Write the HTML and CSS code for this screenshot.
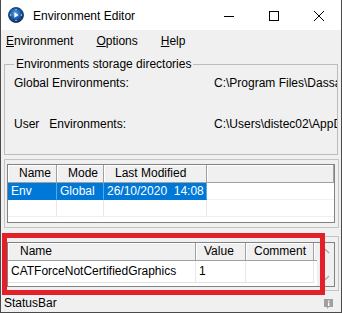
FILE: index.html
```html
<!DOCTYPE html>
<html lang="en">
  <head>
    <meta charset="UTF-8" />
    <meta name="viewport" content="width=device-width, initial-scale=1.0" />
    <title>Environment Editor</title>
    <link rel="stylesheet" href="styles.css">
  </head>
  <body>
    <div class="window">
      <div class="titlebar">
        <svg class="app-icon" viewBox="0 0 16 16" width="16" height="16">
          <defs>
            <radialGradient id="globe" cx="45%" cy="40%" r="60%">
              <stop offset="0" stop-color="#5fa3e6" />
              <stop offset="0.55" stop-color="#1d5fae" />
              <stop offset="1" stop-color="#0a2d60" />
            </radialGradient>
          </defs>
          <circle cx="8" cy="8" r="7.5" fill="url(#globe)" stroke="#0b2a52" stroke-width="0.8" />
          <path d="M6.4 5.2 L10.6 8 L6.4 10.8 Z" fill="#fff" />
          <circle cx="8" cy="2.6" r="0.7" fill="#cfe4ff" />
          <circle cx="8" cy="13.4" r="0.7" fill="#cfe4ff" />
          <circle cx="2.6" cy="8" r="0.7" fill="#cfe4ff" />
          <circle cx="13.4" cy="8" r="0.7" fill="#cfe4ff" />
        </svg>
        <span class="title">Environment Editor</span>
        <div class="caption-buttons">
          <span class="cap-btn">
            <svg viewBox="0 0 10 10" width="10" height="10"><path d="M0 5.5 H10" stroke="#000" stroke-width="1" /></svg>
          </span>
          <span class="cap-btn">
            <svg viewBox="0 0 10 10" width="10" height="10"><rect x="0.5" y="0.5" width="9" height="9" fill="none" stroke="#000" stroke-width="1" /></svg>
          </span>
          <span class="cap-btn">
            <svg viewBox="0 0 10 10" width="10" height="10"><path d="M0 0 L10 10 M10 0 L0 10" stroke="#000" stroke-width="1" /></svg>
          </span>
        </div>
      </div>

      <ul class="menubar">
        <li><u>E</u>nvironment</li>
        <li><u>O</u>ptions</li>
        <li><u>H</u>elp</li>
      </ul>

      <div class="storage">
        <span class="storage-title">Environments storage directories</span>
        <div class="dir-row">
          <span class="dir-label">Global Environments:</span>
          <span class="dir-path">C:\Program Files\Dassault Systemes\B28\win_b64\CATEnv</span>
        </div>
        <div class="dir-row">
          <span class="dir-label">User&nbsp;&nbsp; Environments:</span>
          <span class="dir-path">C:\Users\distec02\AppData\Roaming\DassaultSystemes\CATEnv</span>
        </div>
      </div>

      <div class="panel env-panel">
        <div class="grid env-grid">
          <div class="grid-row grid-head">
            <span class="cell col-name">Name</span>
            <span class="cell col-mode">Mode</span>
            <span class="cell col-date">Last Modified</span>
            <span class="cell col-fill"></span>
          </div>
          <div class="grid-row">
            <span class="cell col-name selected">Env</span>
            <span class="cell col-mode selected">Global</span>
            <span class="cell col-date selected">26/10/2020&nbsp; 14:08</span>
            <span class="cell col-fill"></span>
          </div>
          <div class="grid-row">
            <span class="cell col-name"></span>
            <span class="cell col-mode"></span>
            <span class="cell col-date"></span>
            <span class="cell col-fill"></span>
          </div>
        </div>
      </div>

      <div class="panel var-panel">
        <div class="grid var-grid">
          <div class="var-cols">
            <div class="grid-row grid-head">
              <span class="cell col-var">Name</span>
              <span class="cell col-value">Value</span>
              <span class="cell col-comment">Comment</span>
              <span class="cell col-fill"></span>
            </div>
            <div class="grid-row var-row">
              <span class="cell col-var">CATForceNotCertifiedGraphics</span>
              <span class="cell col-value">1</span>
              <span class="cell col-comment"></span>
            </div>
          </div>
          <div class="vscroll">
            <svg viewBox="0 0 17 17" width="17" height="17"><path d="M5 10 L8.5 6.5 L12 10" fill="none" stroke="#a3a3a3" stroke-width="1.2" /></svg>
            <svg viewBox="0 0 17 17" width="17" height="17"><path d="M5 7 L8.5 10.5 L12 7" fill="none" stroke="#a3a3a3" stroke-width="1.2" /></svg>
          </div>
        </div>
      </div>

      <div class="statusbar">
        <span>StatusBar</span>
        <svg class="info-icon" viewBox="0 0 9 10" width="9" height="10">
          <path d="M0 0 H9 V8 H5 L3 10 V8 H0 Z" fill="#a0a0a0" />
          <rect x="4" y="1.5" width="1.4" height="1.3" fill="#fff" />
          <rect x="4" y="3.6" width="1.4" height="3.4" fill="#fff" />
        </svg>
      </div>

      <div class="highlight"></div>
    </div>
  </body>
</html>
```

FILE: styles.css
```css
* {
  box-sizing: border-box;
}

body {
  margin: 0;
  font-family: "Liberation Sans", Arial, sans-serif;
  font-size: 12px;
  color: #000;
  background-color: #fff;
}

.window {
  position: relative;
  width: 342px;
  height: 313px;
  display: flex;
  flex-direction: column;
  background-color: #f0f0f0;
  border: 1px solid #4a4a4a;
  border-top: none;
  overflow: hidden;
}

.titlebar {
  flex: none;
  height: 30px;
  display: flex;
  align-items: center;
  background-color: #fff;
}

.app-icon {
  margin-left: 7px;
}

.title {
  margin-left: 9px;
  padding-top: 1px;
}

.caption-buttons {
  margin-left: auto;
  display: flex;
  height: 100%;
}

.cap-btn {
  width: 45px;
  display: flex;
  align-items: center;
  justify-content: center;
  padding-top: 1px;
}

.menubar {
  flex: none;
  height: 21px;
  margin: 0;
  padding: 0 0 0 5px;
  list-style: none;
  display: flex;
  align-items: center;
  gap: 23px;
}

/* group box: the border starts halfway down the caption line */
.storage {
  position: relative;
  flex: none;
  width: 334px;
  height: 91px;
  margin: 13px 3px 0;
  padding: 11px 0 0 9px;
  border: 1px solid #bcbcbc;
}

.storage-title {
  position: absolute;
  top: -8px;
  left: 9px;
  padding: 0 2px;
  line-height: 14px;
  background-color: #f0f0f0;
}

.dir-row {
  display: flex;
  line-height: 14px;
  white-space: nowrap;
  overflow: hidden;
}

.dir-row + .dir-row {
  margin-top: 27px;
}

.dir-label {
  flex: none;
  width: 200px;
}

.dir-path {
  min-width: 0;
  overflow: hidden;
}

.panel {
  flex: none;
  margin: 0 2px 0 3px;
  border: 1px solid #c4c4c4;
}

.env-panel {
  margin-top: 4px;
  padding: 4px 3px 4px 2px;
}

.var-panel {
  margin-top: 8px;
  padding: 5px 3px 3px 2px;
}

.grid {
  border: 1px solid #828282;
  background-color: #fff;
  overflow: hidden;
}

.env-grid {
  height: 59px;
}

.var-grid {
  height: 45px;
  display: flex;
}

.var-cols {
  flex: 1;
  min-width: 0;
}

.grid-row {
  display: flex;
  height: 17px;
}

.cell {
  flex: none;
  height: 100%;
  padding-left: 3px;
  line-height: 16px;
  white-space: nowrap;
  overflow: hidden;
  border-right: 1px solid #e8e8e8;
  border-bottom: 1px solid #f0f0f0;
}

.grid-head {
  height: 18px;
}

.grid-head .cell {
  padding-left: 11px;
  line-height: 17px;
  background-color: #f0f0f0;
  border-right: 1px solid #a0a0a0;
  border-bottom: 1px solid #a0a0a0;
  box-shadow: inset 1px 1px 0 #fff;
}

.col-name {
  width: 49px;
}

.col-mode {
  width: 47px;
}

.col-date {
  width: 103px;
}

.col-fill {
  flex: 1;
  border-right: none;
}

.selected {
  background-color: #0078d7;
  color: #fff;
  border-right-color: #5aa7e6;
  border-bottom-color: #0078d7;
}

.col-var {
  width: 188px;
}

.col-value {
  width: 50px;
}

.col-comment {
  width: 68px;
}

.grid-head .col-var {
  padding-left: 12px;
}

.grid-head .col-value,
.grid-head .col-comment {
  padding-left: 8px;
}

.var-row {
  height: 22px;
}

.var-row .cell {
  line-height: 21px;
  border-bottom-color: #e3e3e3;
}

.vscroll {
  flex: none;
  width: 17px;
  display: flex;
  flex-direction: column;
  justify-content: space-between;
  background-color: #f0f0f0;
}

.statusbar {
  flex: 1;
  margin-top: 3px;
  padding: 0 8px 0 3px;
  display: flex;
  align-items: center;
  justify-content: space-between;
}

.info-icon {
  margin-top: 2px;
}

.highlight {
  position: absolute;
  left: 1px;
  top: 233px;
  width: 323px;
  height: 62px;
  border: 5px solid #e3202a;
}
```
